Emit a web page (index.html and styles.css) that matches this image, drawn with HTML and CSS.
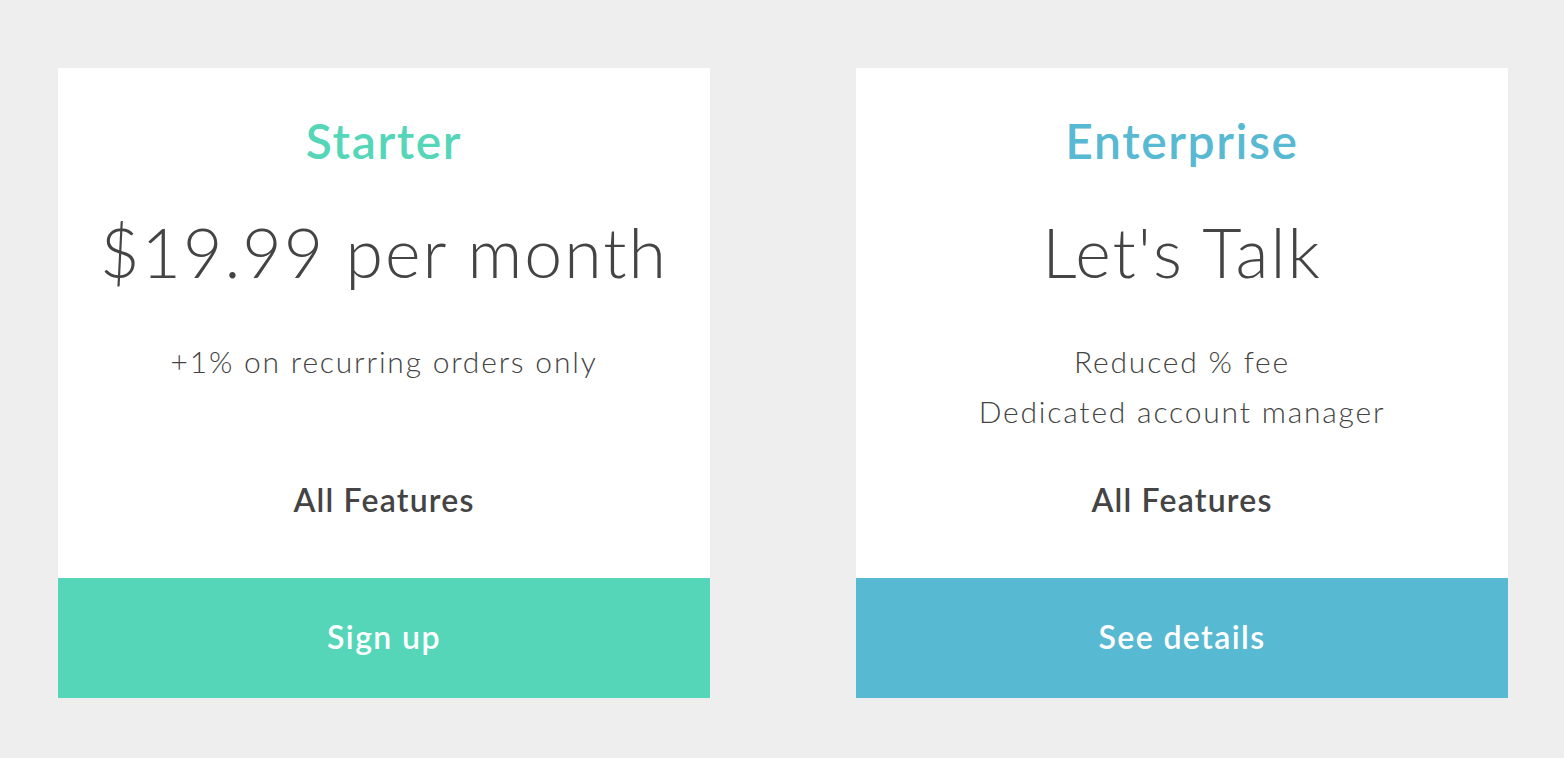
FILE: index.html
```html
<!DOCTYPE html>
<html lang="en">
<head>
  <meta charset="UTF-8">
  <meta name="viewport" content="width=device-width, initial-scale=1">
  <title>Pricing</title>
  <link rel="stylesheet" href="styles.css">
</head>
<body>
  <div class="plans">
    <div class="plan plan-starter">
      <div class="plan-body">
        <h2 class="plan-name">Starter</h2>
        <p class="plan-price">$19.99 per month</p>
        <ul class="plan-details">
          <li>+1% on recurring orders only</li>
        </ul>
        <p class="plan-features">All Features</p>
      </div>
      <a href="#" class="plan-btn">Sign up</a>
    </div>
    <div class="plan plan-enterprise">
      <div class="plan-body">
        <h2 class="plan-name">Enterprise</h2>
        <p class="plan-price">Let's Talk</p>
        <ul class="plan-details">
          <li>Reduced % fee</li>
          <li>Dedicated account manager</li>
        </ul>
        <p class="plan-features">All Features</p>
      </div>
      <a href="#" class="plan-btn">See details</a>
    </div>
  </div>
</body>
</html>
```

FILE: styles.css
```css
/* Reset */
* {
  box-sizing: border-box;
  margin: 0;
  padding: 0;
}

body {
  font-family: Lato, 'Open Sans', sans-serif;
  background: #eeeeee;
  color: #444444;
  padding: 68px 0 0 58px;
}

.plans {
  display: flex;
  gap: 146px;
}

.plan {
  width: 652px;
  background: #fff;
  display: flex;
  flex-direction: column;
  text-align: center;
}

.plan-body {
  padding: 48px 10px 53px;
  display: flex;
  flex-direction: column;
}

.plan-name {
  font-size: 48px;
  line-height: 50px;
  font-weight: 600;
  letter-spacing: 1.6px;
}

.plan-starter .plan-name {
  color: #55d6b9;
}

.plan-enterprise .plan-name {
  color: #58b9d2;
}

.plan-price {
  margin-top: 46px;
  font-size: 68px;
  line-height: 80px;
  font-weight: 300;
  letter-spacing: 2px;
}

.plan-details {
  list-style: none;
  margin-top: 44px;
  height: 100px;
  font-size: 30px;
  line-height: 50px;
  font-weight: 300;
  letter-spacing: 1.8px;
}

.plan-features {
  margin-top: 39px;
  font-size: 32px;
  line-height: 50px;
  font-weight: 600;
  letter-spacing: 1.2px;
}

.plan-btn {
  display: block;
  height: 120px;
  line-height: 118px;
  color: #fff;
  font-size: 32px;
  font-weight: 600;
  letter-spacing: 1.4px;
  text-decoration: none;
}

.plan-starter .plan-btn {
  background: #55d6b9;
}

.plan-enterprise .plan-btn {
  background: #58b9d2;
}
```
